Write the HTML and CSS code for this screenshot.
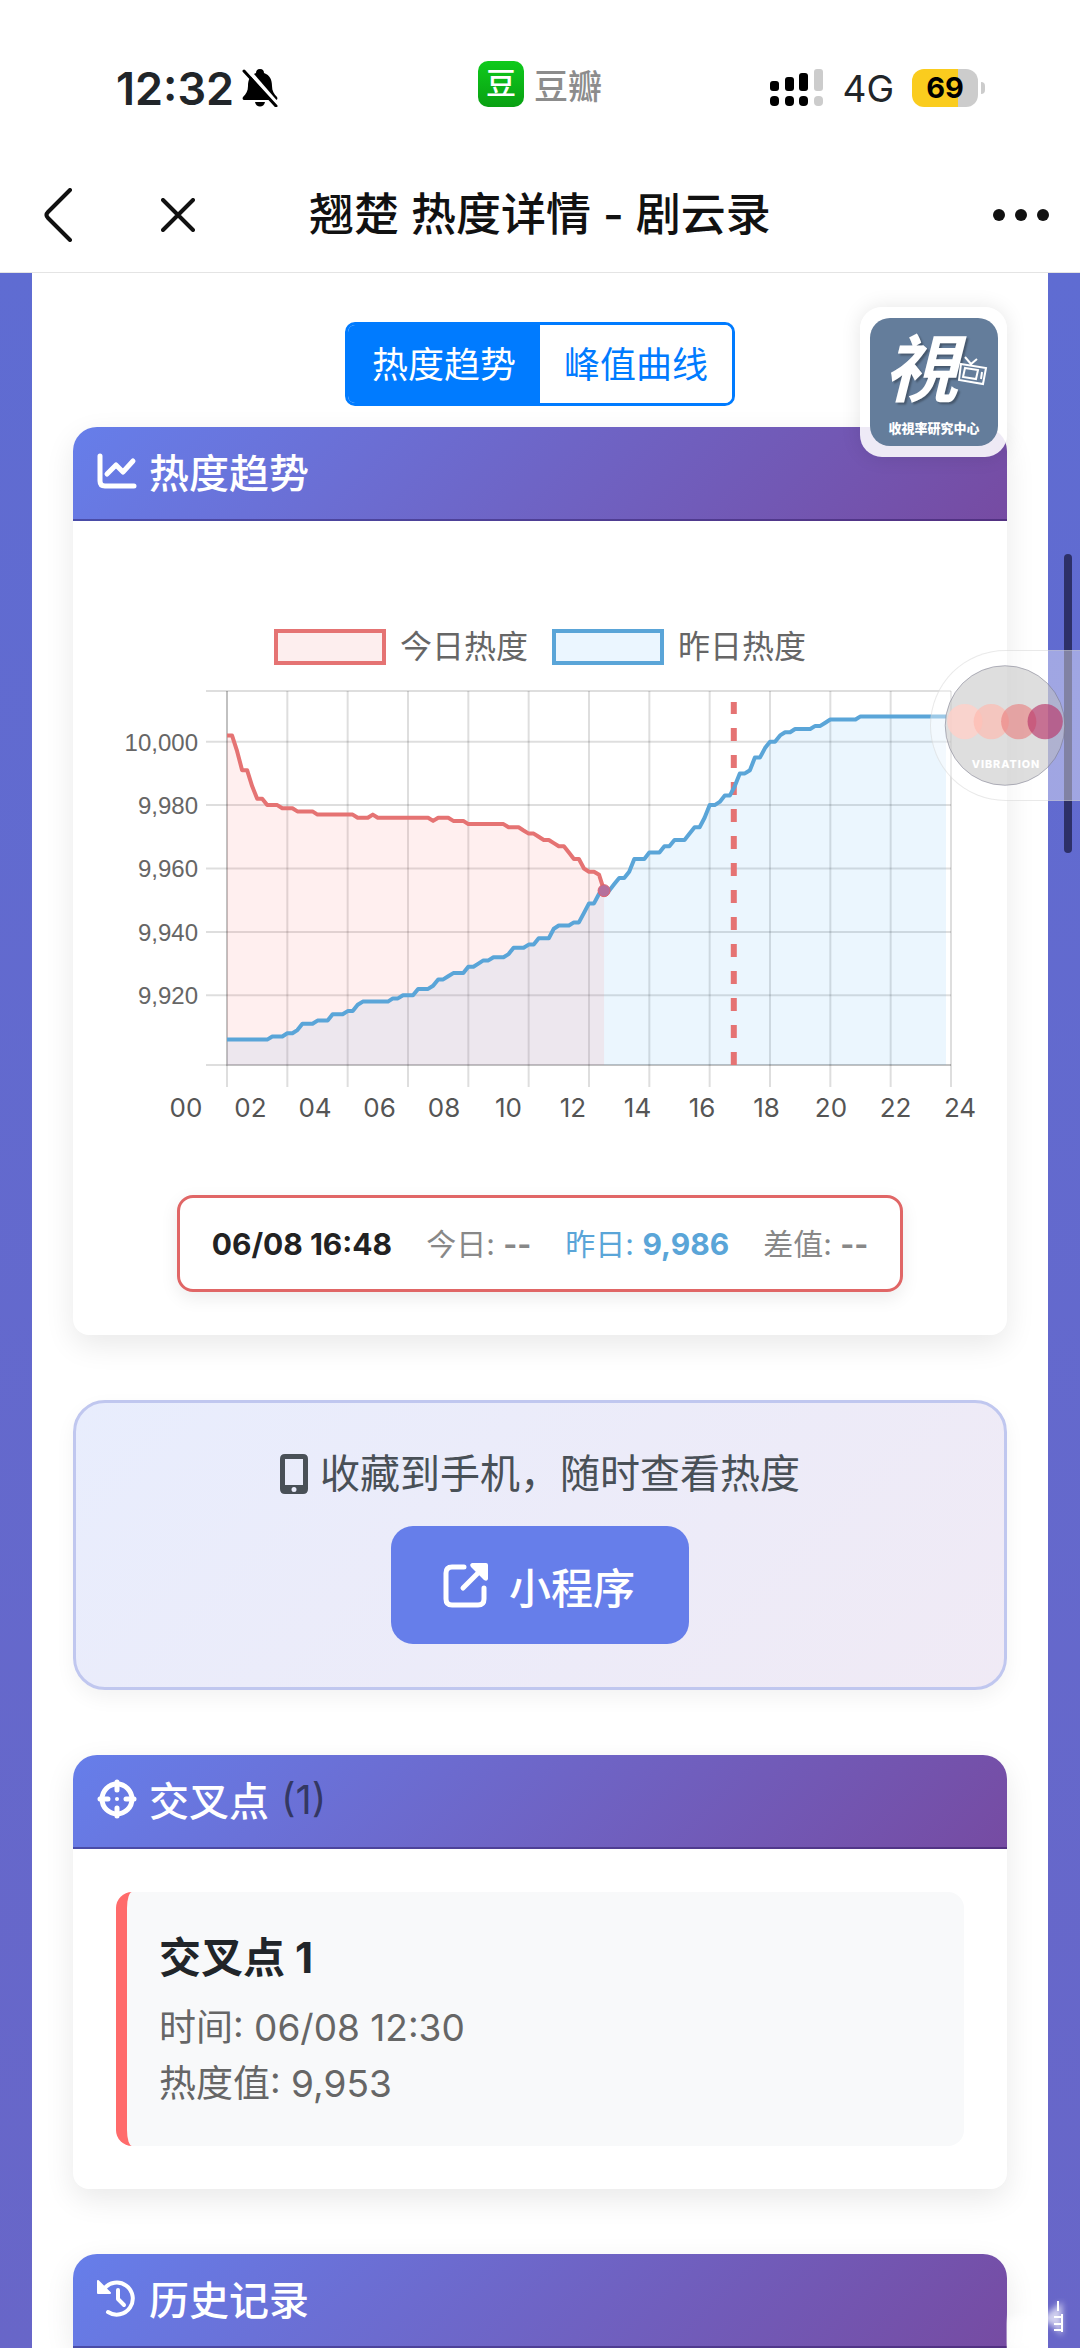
FILE: index.html
```html
<!DOCTYPE html>
<html lang="zh-CN">
<head>
  <meta charset="UTF-8" />
  <meta name="viewport" content="width=device-width, initial-scale=1.0"/>
  <title>翘楚 热度详情 - 剧云录</title>
  <link rel="stylesheet" href="styles.css">
</head>
<body>
  <div class="status-bar">
    <div class="status-left">
      <span class="time">12:32</span>
      <svg class="bell" viewBox="0 0 36 38">
        <path d="M18 0c-3 0-4 2-4 4C8 6 6 11 6 17c0 5-2 8-5 11-1 2 0 3 2 3h30c2 0 3-1 2-3-3-3-5-6-5-11 0-6-2-11-8-13 0-2-1-4-4-4zM13 33h10c-1 6-9 6-10 0z"/>
        <path d="M5 0l32 37" stroke="#fff" stroke-width="4"/>
        <path d="M2 2l32 35" stroke="#000" stroke-width="3" stroke-linecap="round"/>
      </svg>
    </div>
    <div class="status-app">
      <span class="app-icon">豆</span>
      <span>豆瓣</span>
    </div>
    <div class="status-right">
      <svg class="signal" viewBox="0 0 54 38">
        <rect x="0" y="12" width="9" height="10" rx="3"/>
        <rect x="15" y="8" width="9" height="14" rx="3"/>
        <rect x="29" y="4" width="9" height="18" rx="3"/>
        <rect x="0" y="27" width="9" height="10" rx="4"/>
        <rect x="15" y="27" width="9" height="10" rx="4"/>
        <rect x="29" y="27" width="9" height="10" rx="4"/>
        <rect x="44" y="0" width="9" height="22" rx="3" fill="#ccc"/>
        <rect x="44" y="27" width="9" height="10" rx="4" fill="#ccc"/>
      </svg>
      <span class="network">4G</span>
      <span class="battery">69</span>
    </div>
  </div>

  <header class="nav-bar">
    <button class="nav-btn back" aria-label="返回">
      <svg viewBox="0 0 30 54"><path d="M27 2L5 24q-3 3 0 6l22 22"/></svg>
    </button>
    <button class="nav-btn close" aria-label="关闭">
      <svg viewBox="0 0 34 34"><path d="M2 2l30 30M32 2L2 32"/></svg>
    </button>
    <h1>翘楚 热度详情 - 剧云录</h1>
    <button class="nav-btn more" aria-label="更多"><i></i><i></i><i></i></button>
  </header>

  <main class="page">
    <div class="panel">
      <div class="tabs">
        <button class="active">热度趋势</button>
        <button>峰值曲线</button>
      </div>

      <section class="card trend">
        <h2 class="card-header">
          <svg viewBox="0 0 40 36" class="line-icon"><path d="M3 3v25q0 5 5 5h29M10 21l9-9 7 7L36 8"/></svg>
          <span>热度趋势</span>
        </h2>
        <div class="card-body">
          <div class="legend">
            <span class="legend-item"><i class="box today"></i>今日热度</span>
            <span class="legend-item"><i class="box yesterday"></i>昨日热度</span>
          </div>
          <svg class="chart" id="chart" viewBox="116 680 848 410"></svg>
          <div class="hours" id="hours"></div>
          <div class="readout">
            <strong>06/08 16:48</strong>
            <span>今日: <b>--</b></span>
            <span class="blue">昨日: <b>9,986</b></span>
            <span>差值: <b>--</b></span>
          </div>
        </div>
      </section>

      <section class="promo">
        <p>
          <svg viewBox="0 0 28 40"><path fill-rule="evenodd" d="M5 0h18q5 0 5 5v30q0 5-5 5H5q-5 0-5-5V5q0-5 5-5zM5 5v26h18V5zM14 33a2.500 2.500 0 1 0 0 5 2.500 2.500 0 0 0 0-5z"/></svg>
          收藏到手机，随时查看热度
        </p>
        <button>
          <svg viewBox="0 0 46 46"><path d="M21 5H9q-6 0-6 6v26q0 6 6 6h26q6 0 6-6V26M20 26L37 9" fill="none" stroke="#fff" stroke-width="5" stroke-linecap="round"/><path d="M29 1h14q2 0 2 2v14q-1 3-4 1L28 5q-2-3 1-4z" fill="#fff"/></svg>
          小程序
        </button>
      </section>

      <section class="card">
        <h2 class="card-header">
          <svg viewBox="0 0 40 40" class="line-icon"><circle cx="20" cy="20" r="15"/><path d="M20 3v8M20 29v8M3 20h8M29 20h8"/><circle cx="20" cy="20" r="2" fill="#fff" stroke="none"/></svg>
          <span>交叉点</span>
          <span class="count">(1)</span>
        </h2>
        <div class="card-body">
          <div class="cross-item">
            <h3>交叉点 1</h3>
            <p>时间: 06/08 12:30</p>
            <p>热度值: 9,953</p>
          </div>
        </div>
      </section>

      <section class="card">
        <h2 class="card-header">
          <svg viewBox="0 0 40 40" class="line-icon"><path d="M7 11A16 16 0 1 1 11 34" stroke-width="4"/><path d="M21 12v9l6 6" stroke-width="4"/><path d="M1 3v12h12z" fill="#fff" stroke-width="2"/></svg>
          <span>历史记录</span>
        </h2>
      </section>
    </div>

    <div class="logo-badge">
      <div class="logo">
        <span class="logo-char">視</span>
        <svg class="tv" viewBox="0 0 30 32"><path d="M3 10l25 4-3 16-24-4zM7 14l13 2-2 9-13-2zM7 3l6 7 6-5M24 18l-1 7"/></svg>
        <span class="logo-name">收視率研究中心</span>
      </div>
    </div>

    <div class="floating">
      <svg viewBox="0 0 149 152">
        <circle cx="74" cy="76" r="61" fill="rgba(190,190,190,.5)" stroke="rgba(110,110,130,.5)"/>
        <circle cx="33" cy="72" r="18" fill="#ffd0c8" opacity=".8"/>
        <circle cx="60" cy="72" r="18" fill="#ffb8ae" opacity=".65"/>
        <circle cx="88" cy="72" r="18" fill="#ea7d7d" opacity=".6"/>
        <circle cx="115" cy="72" r="18" fill="#b8366a" opacity=".65"/>
        <text x="75" y="119" text-anchor="middle">VIBRATION</text>
      </svg>
    </div>

    <svg class="corner-mark" viewBox="0 0 70 50">
      <path class="smear" d="M0 22Q20 12 38 18L56 4V38Q44 22 36 24V50H0z"/>
      <path d="M52 3v10M48 19h8M48 26h8M48 32h8M56 16v18" stroke="#fff" stroke-width="2"/>
    </svg>

    <div class="scroll-thumb"></div>
  </main>

  <script>
    const chart = document.getElementById("chart");

    // one value every 10 minutes, stored as [value, repeat]
    const today = [
      [10002, 2], [9997, 1], [9991, 2], [9986, 1], [9982, 2], [9980, 3], [9979, 3], [9978, 4],
      [9977, 8], [9976, 3], [9977, 1], [9976, 11], [9975, 1], [9976, 3], [9975, 3], [9974, 8],
      [9973, 3], [9972, 1], [9971, 2], [9970, 1], [9969, 2], [9968, 1], [9967, 2], [9965, 1],
      [9963, 2], [9960, 1], [9959, 2], [9958, 1], [9953, 1]
    ];
    const yesterday = [
      [9906, 9], [9907, 3], [9908, 2], [9909, 1], [9911, 3], [9912, 3], [9914, 3], [9915, 2],
      [9917, 1], [9918, 6], [9919, 2], [9920, 3], [9922, 3], [9923, 1], [9925, 2], [9926, 1],
      [9927, 3], [9929, 2], [9930, 1], [9931, 2], [9932, 3], [9933, 1], [9935, 3], [9936, 2],
      [9938, 3], [9941, 1], [9942, 3], [9943, 2], [9946, 1], [9949, 2], [9952, 1], [9953, 2],
      [9955, 1], [9957, 2], [9959, 1], [9963, 3], [9965, 3], [9967, 2], [9969, 3], [9971, 1],
      [9973, 2], [9976, 1], [9980, 2], [9981, 1], [9983, 2], [9986, 1], [9990, 2], [9991, 1],
      [9995, 2], [9998, 1], [10000, 2], [10002, 1], [10003, 2], [10004, 4], [10005, 2],
      [10006, 1], [10007, 6], [10008, 18]
    ];

    const left = 227, right = 951, top_ = 691, bottom = 1065;
    const min = 9898, max = 10016;
    const px = i => left + (right - left) * i / 144;
    const py = v => bottom - (bottom - top_) * (v - min) / (max - min);

    function points(series) {
      const values = series.flatMap(([v, n]) => Array(n).fill(v));
      return values.map((v, i) => px(i).toFixed(1) + "," + py(v).toFixed(1));
    }

    function area(pts, cls) {
      const last = pts[pts.length - 1].split(",")[0];
      return `<polygon class="${cls}" points="${left},${bottom} ${pts.join(" ")} ${last},${bottom}"/>`;
    }

    function drawChart() {
      const a = points(today);
      const b = points(yesterday);
      let out = "";
      [10016, 10000, 9980, 9960, 9940, 9920, 9898].forEach(v => {
        out += `<line class="grid" x1="206" x2="${right}" y1="${py(v)}" y2="${py(v)}"/>`;
        if (v % 20 === 0) {
          out += `<text class="tick" x="198" y="${py(v) + 9}">${v.toLocaleString("en-US")}</text>`;
        }
      });
      for (let h = 0; h <= 24; h += 2) {
        out += `<line class="grid" x1="${px(h * 6)}" x2="${px(h * 6)}" y1="${top_}" y2="1087"/>`;
      }
      out += `<path class="axis" d="M${left} ${top_}V${bottom}H${right}"/>`;
      out += area(b, "fill-b") + area(a, "fill-a");
      out += `<polyline class="line-a" points="${a.join(" ")}"/>`;
      out += `<line class="marker" x1="${px(100.8)}" x2="${px(100.8)}" y1="${bottom}" y2="702"/>`;
      out += `<polyline class="line-b" points="${b.join(" ")}"/>`;
      out += `<circle class="cross" cx="${px(75)}" cy="${py(9953)}" r="6"/>`;
      chart.innerHTML = out;
    }

    const hours = document.getElementById("hours");
    for (let h = 0; h <= 24; h += 2) {
      const span = document.createElement("span");
      span.textContent = String(h).padStart(2, "0");
      hours.appendChild(span);
    }

    drawChart();
  </script>
</body>
</html>
```

FILE: styles.css
```css
:root {
  --text: #212529;
  --muted: #666;
  --red: #e57373;
  --blue: #5aa5d8;
  --primary: #667eea;
  --brand: linear-gradient(135deg, #667eea 0%, #764ba2 100%);
}

* {
  box-sizing: border-box;
  margin: 0;
  padding: 0;
}

body {
  display: flex;
  flex-direction: column;
  min-height: 100vh;
  background: #fff;
  color: var(--text);
  font-family: Inter, "Noto Sans CJK SC", sans-serif;
}

button {
  font-family: inherit;
  cursor: pointer;
}

/* status bar */
.status-bar {
  display: grid;
  grid-template-columns: 1fr auto 1fr;
  align-items: center;
  height: 176px;
  padding: 0 102px;
}

.status-left,
.status-app,
.status-right {
  display: flex;
  align-items: center;
}

.status-left {
  gap: 8px;
  padding-left: 14px;
}

.time {
  font-size: 45px;
  font-weight: 600;
}

.bell {
  width: 36px;
  height: 38px;
}

.status-app {
  gap: 10px;
  padding-bottom: 8px;
  font-size: 34px;
  font-weight: 500;
  color: #8c8c8c;
}

.app-icon {
  width: 46px;
  height: 46px;
  border-radius: 10px;
  background: linear-gradient(#0fca1c, #09a012);
  color: #fff;
  font-size: 30px;
  line-height: 44px;
  text-align: center;
}

.status-right {
  justify-content: flex-end;
  gap: 18px;
}

.signal {
  width: 54px;
  height: 38px;
}

.network {
  font-size: 37px;
}

.battery {
  position: relative;
  width: 66px;
  height: 38px;
  border-radius: 12px;
  background: linear-gradient(90deg, #facc1e 70%, #ccc 70%);
  color: #000;
  font-size: 29px;
  font-weight: 700;
  line-height: 38px;
  text-align: center;
}

.battery::after {
  content: "";
  position: absolute;
  right: -7px;
  top: 13px;
  width: 4px;
  height: 12px;
  border-radius: 0 4px 4px 0;
  background: #ccc;
}

/* nav bar */
.nav-bar {
  display: flex;
  align-items: center;
  height: 97px;
  padding: 0 31px 18px 43px;
  border-bottom: 1px solid #e4e4e4;
}

.nav-bar h1 {
  flex: 1;
  padding-left: 114px;
  font-size: 45px;
  font-weight: 500;
  line-height: 60px;
  color: #111;
}

.nav-btn {
  border: none;
  background: none;
}

.nav-btn svg {
  display: block;
  fill: none;
  stroke: #111;
  stroke-width: 4;
  stroke-linecap: round;
}

.back svg {
  width: 30px;
  height: 54px;
}

.close {
  margin-left: 88px;
}

.close svg {
  width: 34px;
  height: 34px;
}

.more {
  display: flex;
  gap: 10px;
}

.more i {
  width: 12px;
  height: 12px;
  border-radius: 50%;
  background: #111;
}

/* page */
.page {
  position: relative;
  flex: 1;
  padding: 0 32px;
  background: linear-gradient(#5f6cd2, #6866c8);
  overflow: hidden;
}

.panel {
  height: 100%;
  padding: 49px 41px 0;
  background: #fff;
}

.tabs {
  display: flex;
  width: max-content;
  margin: 0 auto 21px;
  border: 3px solid #007bff;
  border-radius: 10px;
  overflow: hidden;
}

.tabs button {
  height: 78px;
  padding: 0 24px 4px;
  border: none;
  background: #fff;
  color: #007bff;
  font-size: 36px;
}

.tabs button.active {
  background: #007bff;
  color: #fff;
}

.card {
  margin-bottom: 65px;
  border-radius: 24px 24px 16px 16px;
  background: #fff;
  box-shadow: 0 10px 30px rgba(0, 0, 0, 0.09);
}

.card:last-child {
  margin-bottom: 0;
}

.card-header {
  display: flex;
  align-items: center;
  gap: 12px;
  height: 94px;
  padding: 0 24px 4px;
  border-bottom: 2px solid rgba(30, 10, 80, 0.4);
  border-radius: 24px 24px 0 0;
  background: var(--brand) border-box;
  color: #fff;
  font-size: 40px;
  font-weight: 500;
}

.line-icon {
  width: 40px;
  height: 40px;
  fill: none;
  stroke: #fff;
  stroke-width: 5;
  stroke-linecap: round;
  stroke-linejoin: round;
}

.count {
  color: rgba(33, 37, 60, 0.75);
  font-weight: 400;
}

.card-body {
  padding: 43px;
}

/* chart */
.legend {
  display: flex;
  justify-content: center;
  gap: 24px;
  margin: 65px 0 15px;
  color: var(--muted);
  font-size: 32px;
  line-height: 36px;
}

.legend-item {
  display: flex;
  gap: 14px;
}

.box {
  width: 112px;
  border: 4px solid var(--red);
  background: #fdeeee;
}

.box.yesterday {
  border-color: var(--blue);
  background: #ebf6ff;
}

.chart {
  display: block;
  width: 100%;
}

.grid {
  stroke: rgba(0, 0, 0, 0.13);
  stroke-width: 2;
}

.axis {
  fill: none;
  stroke: rgba(0, 0, 0, 0.13);
  stroke-width: 2;
}

.tick {
  fill: var(--muted);
  font-family: "Liberation Sans", Arial, sans-serif;
  font-size: 24px;
  text-anchor: end;
}

.fill-a {
  fill: rgba(255, 107, 107, 0.11);
}

.fill-b {
  fill: rgba(69, 170, 242, 0.11);
}

.line-a,
.line-b {
  fill: none;
  stroke: var(--red);
  stroke-width: 4;
  stroke-linejoin: round;
}

.line-b {
  stroke: var(--blue);
}

.marker {
  stroke: var(--red);
  stroke-width: 6;
  stroke-dasharray: 13 14;
}

.cross {
  fill: #b5709c;
  stroke: #e0626c;
  stroke-width: 1;
}

.hours {
  display: flex;
  justify-content: space-between;
  margin: 0 -14px 69px 52px;
  color: #555;
  font-size: 26px;
  line-height: 36px;
}

.hours span {
  width: 36px;
  text-align: center;
}

.readout {
  display: flex;
  align-items: center;
  justify-content: center;
  gap: 34px;
  width: max-content;
  height: 97px;
  margin: 0 auto;
  padding: 0 32px;
  border: 3px solid #e06666;
  border-radius: 16px;
  box-shadow: 0 6px 18px rgba(0, 0, 0, 0.08);
  color: #888;
  font-size: 30px;
  line-height: 40px;
  white-space: nowrap;
}

.readout strong {
  color: #222;
}

.readout .blue {
  color: var(--blue);
}

/* promo */
.promo {
  display: flex;
  flex-direction: column;
  align-items: center;
  gap: 24px;
  margin-bottom: 65px;
  padding: 43px 0;
  border: 3px solid #c0c7ef;
  border-radius: 32px;
  background: linear-gradient(135deg, #e8edfd, #f0eaf5);
  box-shadow: 0 8px 20px rgba(0, 0, 0, 0.05);
}

.promo p {
  display: flex;
  align-items: center;
  gap: 12px;
  color: #495057;
  font-size: 40px;
  line-height: 56px;
}

.promo p svg {
  width: 28px;
  height: 40px;
  fill: #495057;
}

.promo button {
  display: flex;
  align-items: center;
  gap: 20px;
  height: 118px;
  padding: 0 54px 0 52px;
  border: none;
  border-radius: 22px;
  background: var(--primary);
  color: #fff;
  font-size: 42px;
  font-weight: 500;
}

.promo button svg {
  width: 46px;
  height: 46px;
}

/* cross points */
.cross-item {
  padding: 36px 32px 34px;
  border-left: 11px solid #ff6b6b;
  border-radius: 16px;
  background: #f8f9fa;
}

.cross-item h3 {
  margin-bottom: 12px;
  font-size: 42px;
  line-height: 60px;
}

.cross-item p {
  color: var(--muted);
  font-size: 37px;
  line-height: 56px;
}

/* floating items */
.logo-badge {
  position: absolute;
  top: 34px;
  right: 73px;
  padding: 11px 9px 11px 10px;
  border-radius: 22px;
  background: rgba(255, 255, 255, 0.88);
  box-shadow: 0 0 20px rgba(0, 0, 0, 0.1);
}

.logo {
  position: relative;
  width: 128px;
  height: 128px;
  border-radius: 20px;
  background: #647d9b;
  color: #fff;
  text-align: center;
}

.logo-char {
  display: block;
  padding-right: 26px;
  font-size: 74px;
  font-style: italic;
  font-weight: 700;
  line-height: 102px;
  text-shadow: 2px 2px 2px rgba(0, 0, 0, 0.3);
}

.logo-name {
  display: block;
  font-size: 13px;
  font-weight: 900;
  line-height: 16px;
}

.tv {
  position: absolute;
  top: 36px;
  right: 10px;
  width: 30px;
  height: 32px;
  fill: none;
  stroke: #fff;
  stroke-width: 2;
}

.floating {
  position: absolute;
  top: 377px;
  right: 0;
  z-index: 2;
  border: 1px solid rgba(200, 200, 200, 0.4);
  border-right: none;
  border-radius: 76px 0 0 76px;
  background: rgba(255, 255, 255, 0.4);
}

.floating svg {
  display: block;
  width: 149px;
  height: 149px;
}

.floating text {
  fill: #fff;
  font-size: 11px;
  font-weight: 800;
  letter-spacing: 1px;
}

.corner-mark {
  position: absolute;
  right: 4px;
  bottom: 0;
  width: 70px;
  height: 50px;
  fill: none;
}

.smear {
  fill: rgba(255, 255, 255, 0.7);
  filter: blur(3px);
}

.scroll-thumb {
  position: absolute;
  top: 281px;
  right: 8px;
  width: 8px;
  height: 299px;
  border-radius: 4px;
  background: #2d3068;
}
```
